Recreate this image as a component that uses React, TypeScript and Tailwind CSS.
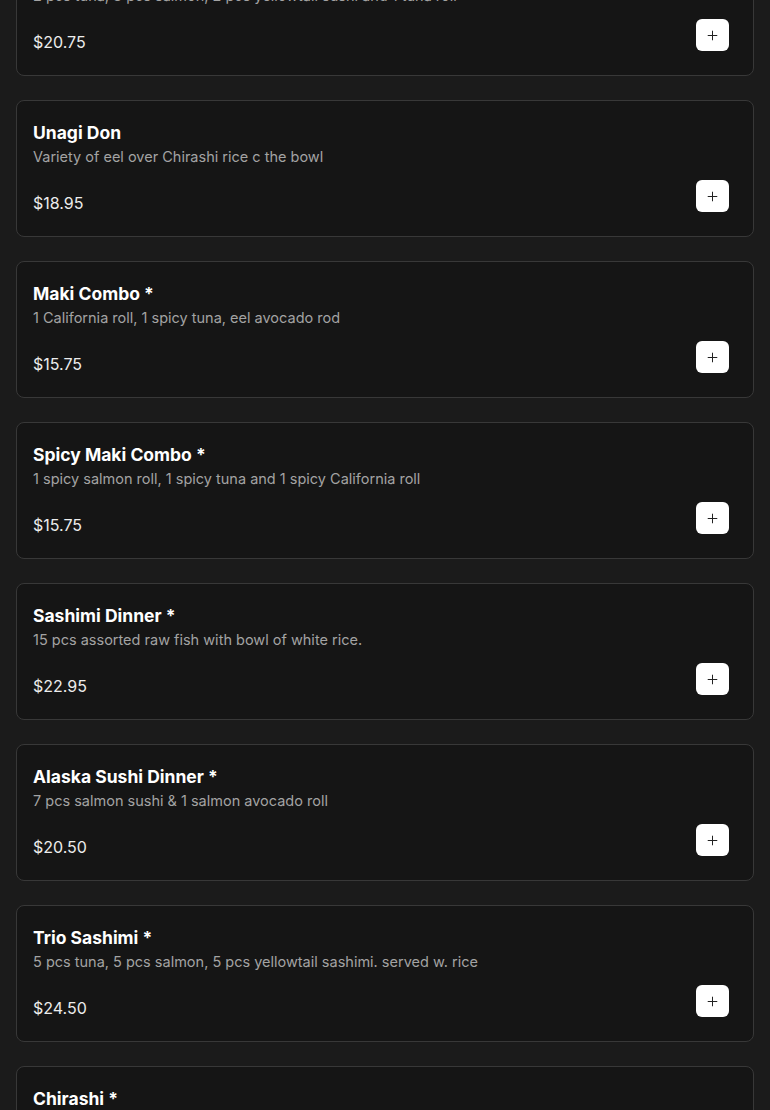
import React from "react";
import { Plus } from "lucide-react";

type Item = { name: string; desc: string; price: string };

const items: Item[] = [
  {
    name: "Sushi Dinner *",
    desc: "2 pcs tuna, 3 pcs salmon, 2 pcs yellowtail sushi and 1 tuna roll",
    price: "$20.75",
  },
  { name: "Unagi Don", desc: "Variety of eel over Chirashi rice c the bowl", price: "$18.95" },
  { name: "Maki Combo *", desc: "1 California roll, 1 spicy tuna, eel avocado rod", price: "$15.75" },
  {
    name: "Spicy Maki Combo *",
    desc: "1 spicy salmon roll, 1 spicy tuna and 1 spicy California roll",
    price: "$15.75",
  },
  { name: "Sashimi Dinner *", desc: "15 pcs assorted raw fish with bowl of white rice.", price: "$22.95" },
  { name: "Alaska Sushi Dinner *", desc: "7 pcs salmon sushi & 1 salmon avocado roll", price: "$20.50" },
  {
    name: "Trio Sashimi *",
    desc: "5 pcs tuna, 5 pcs salmon, 5 pcs yellowtail sashimi. served w. rice",
    price: "$24.50",
  },
  { name: "Chirashi *", desc: "Assorted sashimi over a bowl of sushi rice", price: "$21.95" },
];

const MenuCard = ({ item }: { item: Item }) => (
  <div className="flex items-end justify-between rounded-lg border border-[#383838] bg-[#151515] pt-5 pl-4 pr-6 pb-[21px]">
    <div className="flex flex-col">
      <p className="text-[17.5px] font-bold leading-6 text-white">{item.name}</p>
      <p className="mt-[2px] text-[14.5px] leading-5 text-[#a3a3a3]">{item.desc}</p>
      <p className="mt-6 text-base leading-6 text-[#ececec]">{item.price}</p>
    </div>
    <button className="mb-[3px] flex h-8 w-[33px] items-center justify-center rounded-md bg-white text-[#222]">
      <Plus size={15} strokeWidth={1.6} />
    </button>
  </div>
);

export default function App() {
  return (
    <div
      className="h-[1110px] overflow-hidden bg-[#1b1b1b] px-4"
      style={{ fontFamily: "Inter, 'Noto Sans', sans-serif" }}
    >
      <div className="-mt-[61px] flex flex-col gap-6">
        {items.map((it, i) => (
          <MenuCard key={i} item={it} />
        ))}
      </div>
    </div>
  );
}
